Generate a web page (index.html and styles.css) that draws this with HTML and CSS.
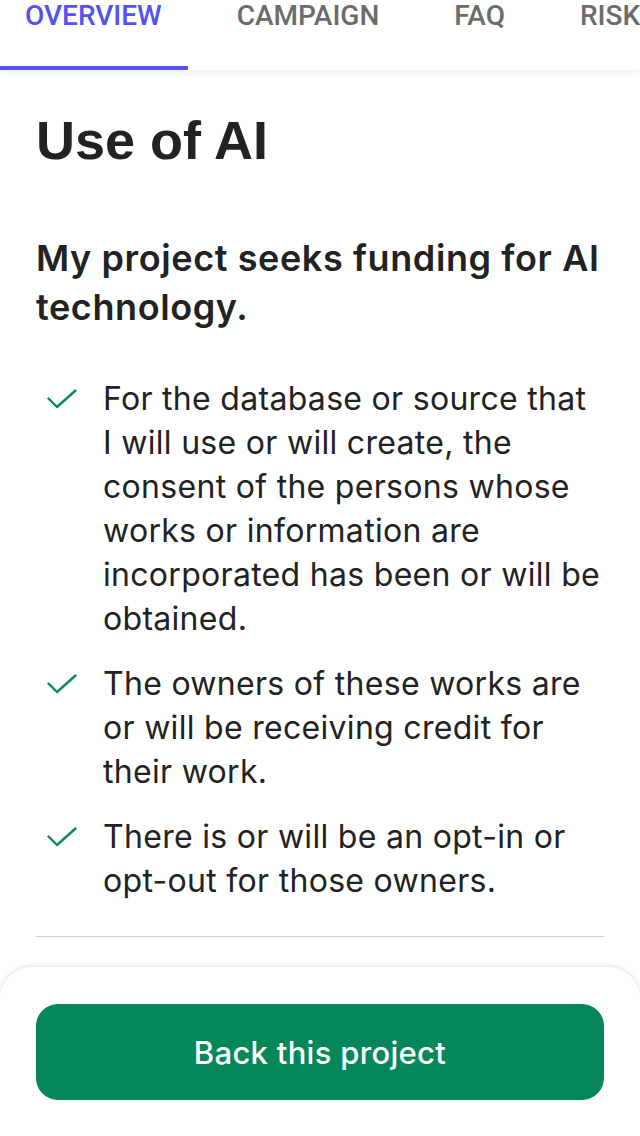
FILE: index.html
```html
<!DOCTYPE html>
<html lang="en">
<head>
<meta charset="utf-8">
<title>Use of AI</title>
<link rel="stylesheet" href="styles.css">
</head>
<body>
<nav class="tabs">
  <a class="tab active">OVERVIEW</a>
  <a class="tab">CAMPAIGN</a>
  <a class="tab">FAQ</a>
  <a class="tab">RISKS</a>
</nav>
<main class="content">
  <h1 class="title">Use of AI</h1>
  <h2 class="subtitle">My project seeks funding for AI technology.</h2>
  <ul class="checks">
    <li class="check-item">
      <svg class="check" viewBox="0 0 30 20" width="30" height="20"><path d="M1.5 9.5 L10 18 L28.5 1.5" fill="none" stroke="#0b8a5d" stroke-width="2.4" stroke-linecap="round" stroke-linejoin="round"/></svg>
      <span>For the database or source that I will use or will create, the consent of the persons whose works or information are incorporated has been or will be obtained.</span>
    </li>
    <li class="check-item">
      <svg class="check" viewBox="0 0 30 20" width="30" height="20"><path d="M1.5 9.5 L10 18 L28.5 1.5" fill="none" stroke="#0b8a5d" stroke-width="2.4" stroke-linecap="round" stroke-linejoin="round"/></svg>
      <span>The owners of these works are or will be receiving credit for their work.</span>
    </li>
    <li class="check-item">
      <svg class="check" viewBox="0 0 30 20" width="30" height="20"><path d="M1.5 9.5 L10 18 L28.5 1.5" fill="none" stroke="#0b8a5d" stroke-width="2.4" stroke-linecap="round" stroke-linejoin="round"/></svg>
      <span>There is or will be an opt-in or opt-out for those owners.</span>
    </li>
  </ul>
  <hr class="divider">
</main>
<footer class="sheet">
  <button class="back-btn">Back this project</button>
</footer>
</body>
</html>
```

FILE: styles.css
```css
html, body {
  margin: 0;
  padding: 0;
  background: #fff;
}
body {
  width: 640px;
  height: 1136px;
  overflow: hidden;
  font-family: Inter, "Noto Sans", sans-serif;
  color: #222;
}
.tabs {
  display: flex;
  gap: 24px;
  height: 70px;
  box-shadow: 0 2px 6px rgba(0, 0, 0, 0.08);
  white-space: nowrap;
  overflow: hidden;
  position: relative;
  z-index: 1;
}
.tab {
  box-sizing: border-box;
  height: 70px;
  padding: 0 26px 0 25px;
  font-family: Roboto, sans-serif;
  font-weight: 500;
  font-size: 28px;
  line-height: 32px;
  color: #6b6b6b;
  border-bottom: 4px solid transparent;
  flex: none;
}
.tab.active {
  color: #5451f4;
  border-bottom-color: #5451f4;
}
.content {
  padding: 0 36px;
}
.title {
  margin: 38px 0 0;
  font-family: "Liberation Sans", Arial, sans-serif;
  font-weight: 700;
  font-size: 54px;
  line-height: 64px;
  color: #222;
}
.subtitle {
  margin: 62px 0 0;
  font-family: Inter, sans-serif;
  font-weight: 600;
  font-size: 36px;
  line-height: 49px;
  letter-spacing: 0.6px;
  color: #222;
}
.checks {
  list-style: none;
  margin: 45px 0 0;
  padding: 0;
}
.check-item {
  display: flex;
  align-items: flex-start;
  gap: 26px;
  font-size: 32px;
  line-height: 44px;
  letter-spacing: 0.3px;
  color: #222;
}
.check-item + .check-item {
  margin-top: 21px;
}
.check {
  flex: none;
  margin: 12px 0 0 11px;
}
.divider {
  margin: 33px 0 0;
  border: 0;
  border-top: 1px solid #cfcfcf;
}
.sheet {
  position: fixed;
  left: 0;
  right: 0;
  bottom: 0;
  height: 169px;
  box-sizing: border-box;
  padding: 37px 36px 0;
  background: #fff;
  border-radius: 32px 32px 0 0;
  box-shadow: 0 -1px 5px rgba(0, 0, 0, 0.12);
}
.back-btn {
  display: block;
  width: 100%;
  height: 96px;
  border: 0;
  border-radius: 22px;
  background: #05875a;
  color: #fff;
  font-family: Inter, sans-serif;
  font-weight: 500;
  font-size: 31px;
  letter-spacing: 0.3px;
}
```
